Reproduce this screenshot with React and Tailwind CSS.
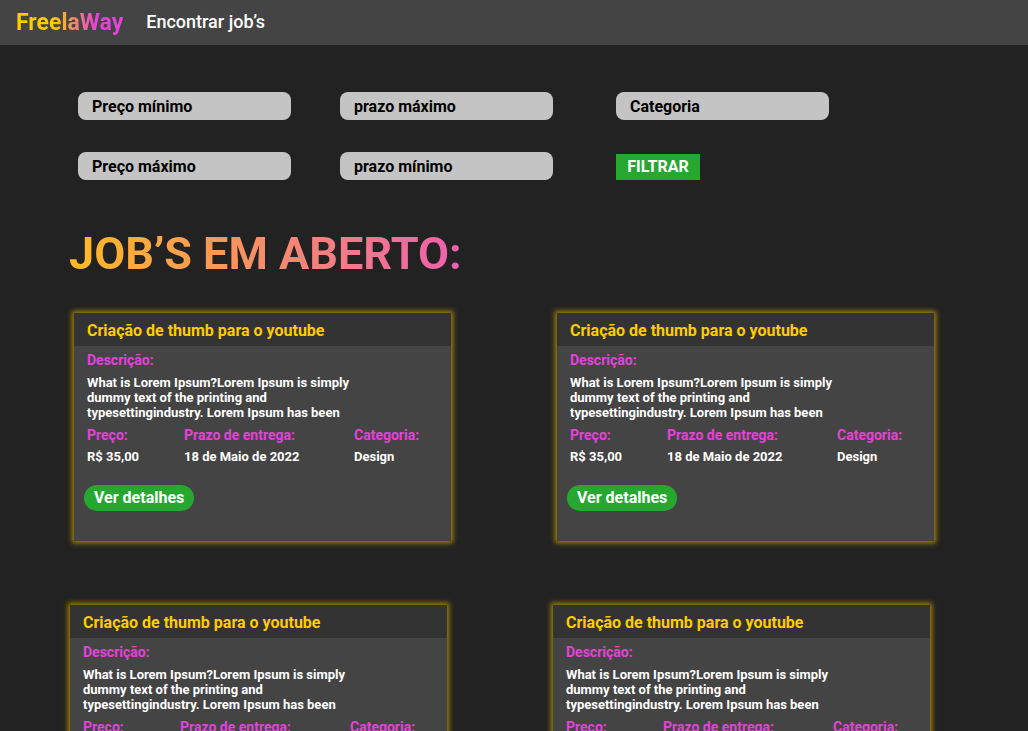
const jobs = [
  { id: 1 },
  { id: 2 },
  { id: 3 },
  { id: 4 },
].map((job) => ({
  ...job,
  title: 'Criação de thumb para o youtube',
  description: [
    'What is Lorem Ipsum?Lorem Ipsum is simply',
    'dummy text of the printing and',
    'typesettingindustry. Lorem Ipsum has been',
  ],
  price: 'R$ 35,00',
  deadline: '18 de Maio de 2022',
  category: 'Design',
}));

function FilterField({ id, label }) {
  return (
    <input
      id={id}
      name={id}
      type="text"
      aria-label={label}
      placeholder={label}
      className="h-7 w-full max-w-[213px] rounded-lg bg-[#c4c4c4] px-3.5 text-base font-bold text-black placeholder:text-black placeholder:opacity-100"
    />
  );
}

function Detail({ label, value }) {
  return (
    <div>
      <dt className="text-[14px] leading-4 text-[#e542d9]">{label}</dt>
      <dd className="mt-1.5 text-[13px] leading-4">{value}</dd>
    </div>
  );
}

function JobCard({ job }) {
  return (
    <article className="h-[228px] bg-[#444444] font-bold text-white shadow-[0_0_5px_2px_#a58308]">
      <h2 className="bg-[#333333] px-[13px] pt-2 pb-[5px] text-base leading-5 text-[#ffcc00]">
        {job.title}
      </h2>
      <div className="px-[13px] pt-1.5">
        <h3 className="text-[14px] leading-4 text-[#e542d9]">Descrição:</h3>
        <p className="mt-[7px] text-[13px] leading-[15px]">
          {job.description.map((line) => (
            <span key={line} className="block">
              {line}
            </span>
          ))}
        </p>
        <dl className="mt-[7px] grid grid-cols-[97px_170px_1fr]">
          <Detail label="Preço:" value={job.price} />
          <Detail label="Prazo de entrega:" value={job.deadline} />
          <Detail label="Categoria:" value={job.category} />
        </dl>
      </div>
      <button
        type="button"
        className="mt-5 ml-2.5 h-[26px] rounded-full bg-[#26a830] px-2.5 text-base leading-5"
      >
        Ver detalhes
      </button>
    </article>
  );
}

export default function App() {
  return (
    <div className="min-h-screen bg-[#222222] pb-16 font-['Roboto',sans-serif] font-bold">
      <header className="flex h-[45px] items-center gap-[23px] bg-[#444444] px-4">
        <a
          href="#"
          className="bg-linear-to-r/srgb from-[#ffcc00] from-35% to-[#e542d9] to-75% bg-clip-text text-[23px] leading-7 text-transparent"
        >
          FreelaWay
        </a>
        <nav>
          <a href="#jobs" className="text-[18px] leading-6 font-medium text-white">
            Encontrar job’s
          </a>
        </nav>
      </header>

      <main>
        <form
          onSubmit={(event) => event.preventDefault()}
          className="grid grid-cols-[262px_276px_1fr] gap-y-8 pt-[47px] pr-8 pl-[78px]"
        >
          <FilterField id="preco-minimo" label="Preço mínimo" />
          <FilterField id="prazo-maximo" label="prazo máximo" />
          <FilterField id="categoria" label="Categoria" />
          <FilterField id="preco-maximo" label="Preço máximo" />
          <FilterField id="prazo-minimo" label="prazo mínimo" />
          <button
            type="submit"
            className="h-[26px] w-[84px] self-end bg-[#26a830] text-base leading-5 text-white"
          >
            FILTRAR
          </button>
        </form>

        <h1
          id="jobs"
          className="mt-[47px] ml-[69px] w-fit bg-linear-to-r/srgb from-[#ffba25] to-[#ee5fb0] bg-clip-text text-[45px] leading-[54px] text-transparent"
        >
          JOB’S EM ABERTO:
        </h1>

        <section aria-label="Job’s em aberto" className="mt-8 flex flex-col gap-16">
          <div className="grid grid-cols-2 gap-[106px] pr-[94px] pl-[74px]">
            {jobs.slice(0, 2).map((job) => (
              <JobCard key={job.id} job={job} />
            ))}
          </div>
          <div className="grid grid-cols-2 gap-[106px] pr-[98px] pl-[70px]">
            {jobs.slice(2).map((job) => (
              <JobCard key={job.id} job={job} />
            ))}
          </div>
        </section>
      </main>
    </div>
  );
}
